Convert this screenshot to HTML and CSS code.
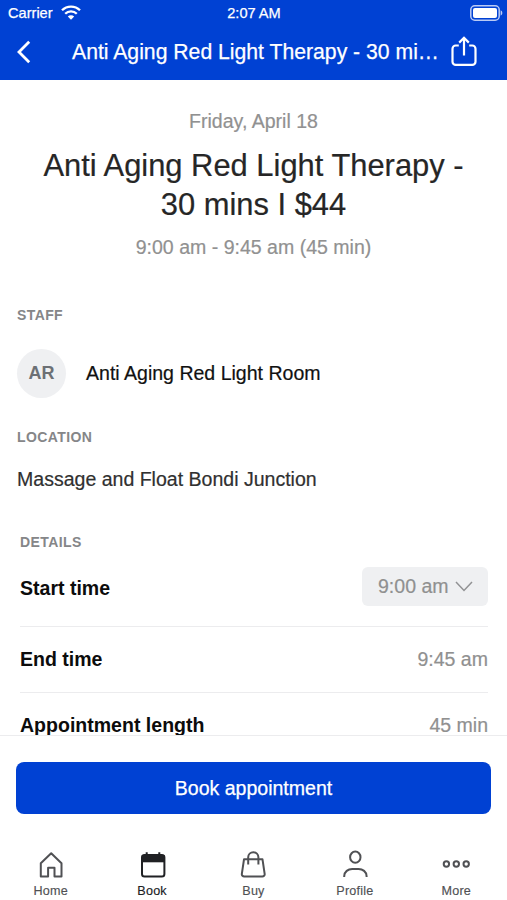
FILE: index.html
```html
<!DOCTYPE html>
<html lang="en">
<head>
<meta charset="utf-8">
<meta name="viewport" content="width=device-width">
<title>Book appointment</title>
<link rel="stylesheet" href="styles.css">
</head>
<body>
<div class="app">
  <header class="header">
    <div class="status">
      <div class="carrier">Carrier
        <svg width="20" height="16" viewBox="0 0 20 16" fill="none" stroke="#fff" stroke-width="2.3"><path d="M1 5.3a12.7 12.7 0 0 1 18 0M4.2 8.7a8.2 8.2 0 0 1 11.6 0"/><path d="M10 14.8 6.8 11.6a4.6 4.6 0 0 1 6.4 0Z" fill="#fff" stroke="none"/></svg>
      </div>
      <div class="clock">2:07 AM</div>
      <svg class="battery" width="33" height="16" viewBox="0 0 33 16"><rect x=".8" y=".8" width="28.4" height="14.4" rx="4" fill="none" stroke="#b9caf5" stroke-width="1.5"/><rect x="3" y="3" width="24" height="10" rx="2" fill="#fff"/><path d="M30.6 5.3q1.8.8 1.8 2.7t-1.8 2.7Z" fill="#b9caf5"/></svg>
    </div>
    <div class="navbar">
      <svg class="back" width="16" height="24" viewBox="0 0 16 24" fill="none" stroke="#fff" stroke-width="2.8"><path d="M13.2 1.8 3 12l10.2 10.2"/></svg>
      <div class="title">Anti Aging Red Light Therapy - 30 mi…</div>
      <svg class="share" width="26" height="31" viewBox="0 0 26 31" fill="none" stroke="#fff" stroke-width="2.2"><path d="M7.8 9.5H4.7a3.2 3.2 0 0 0-3.2 3.2v13a3.2 3.2 0 0 0 3.2 3.2h16.6a3.2 3.2 0 0 0 3.2-3.2v-13a3.2 3.2 0 0 0-3.2-3.2h-3.1M13 19.5V2M8.2 6.6 13 1.8l4.8 4.8"/></svg>
    </div>
  </header>
  <main class="content">
    <div class="date">Friday, April 18</div>
    <h1>Anti Aging Red Light Therapy -<br>30 mins I $44</h1>
    <div class="when">9:00 am - 9:45 am (45 min)</div>
    <h2 class="label">STAFF</h2>
    <div class="staff">
      <div class="avatar">AR</div>
      <div class="name">Anti Aging Red Light Room</div>
    </div>
    <h2 class="label">LOCATION</h2>
    <div class="location">Massage and Float Bondi Junction</div>
    <section class="details">
      <h2 class="label">DETAILS</h2>
      <div class="row start"><b>Start time</b>
        <div class="select">9:00 am <svg width="18" height="11" viewBox="0 0 18 11" fill="none" stroke="#919294" stroke-width="1.5"><path d="m1 1 8 8.5L17 1"/></svg></div>
      </div>
      <div class="row end"><b>End time</b><span>9:45 am</span></div>
      <div class="row length"><b>Appointment length</b><span>45 min</span></div>
    </section>
  </main>
  <div class="action"><button><span>Book appointment</span></button></div>
  <nav class="tabs">
    <div class="tab"><svg width="30" height="30" viewBox="0 0 30 30"><path d="M4.8 13.2 15.2 3.2l10.3 10V26.5h-7v-8.8h-6.4v8.8H4.8Z"/></svg>Home</div>
    <div class="tab active"><svg width="30" height="30" viewBox="0 0 30 30"><rect x="5" y="5" width="22.4" height="21.4" rx="2.5"/><path d="M4.8 5h22.8v7.3H4.8Z" fill="#202124" stroke="none"/><path d="M9.7 2.2V6M22.3 2.2V6"/></svg>Book</div>
    <div class="tab"><svg width="30" height="30" viewBox="0 0 30 30"><path d="M6 9.3h18.5l2.2 14.8a2.3 2.3 0 0 1-2.3 2.4H6.1a2.3 2.3 0 0 1-2.3-2.4ZM10.2 14.5V7.3a5.1 5.1 0 0 1 10.2 0v7.2"/></svg>Buy</div>
    <div class="tab"><svg width="30" height="30" viewBox="0 0 30 30"><ellipse cx="15.3" cy="7.2" rx="5.2" ry="5.6"/><path d="M4.2 27v-.7c0-4.6 4-7.4 8-7.4h6.4c4 0 8 2.8 8 7.4v.7"/></svg>Profile</div>
    <div class="tab"><svg width="30" height="30" viewBox="0 0 30 30"><circle cx="5.4" cy="14" r="2.7"/><circle cx="15.3" cy="14" r="2.7"/><circle cx="25.2" cy="14" r="2.7"/></svg>More</div>
  </nav>
</div>
</body>
</html>
```
FILE: styles.css
```css
* { box-sizing: border-box; }
body { margin: 0; background: #fff; font-family: "Liberation Sans", Arial, sans-serif; font-size: 19.55px; }
svg { display: block; flex: none; }
.app { height: 900px; display: flex; flex-direction: column; overflow: hidden; }
.header { height: 80px; flex: none; background: #0041d3; color: #fff; -webkit-text-stroke: .25px; }
.status { height: 24px; display: grid; grid-template-columns: 1fr auto 1fr; align-items: center; padding: 1px 4px 0 8px; font-size: 14.6px; }
.carrier { display: flex; align-items: center; gap: 8px; }
.clock { margin-right: 3px; }
.battery { justify-self: end; }
.navbar { height: 56px; display: flex; align-items: center; padding: 0 30px 1px 16px; }
.title { width: 367px; margin-left: 40px; font-size: 21.2px; white-space: nowrap; }
.share { margin-left: auto; }
.content { height: 655px; flex: none; overflow: hidden; padding: 0 17px; -webkit-text-stroke: .2px; }
.date { margin-top: 29px; line-height: 24px; text-align: center; color: #919191; }
h1 { margin: 13px 0 0; text-align: center; font-size: 30.9px; line-height: 39px; font-weight: 400; color: #262626; white-space: nowrap; }
.when { margin-top: 11px; line-height: 24px; text-align: center; color: #919191; }
.label { margin: 0; font-size: 14px; line-height: 16px; letter-spacing: .4px; color: #858688; -webkit-text-stroke: 0; }
.when + .label { margin-top: 48px; }
.staff { display: flex; align-items: center; gap: 20px; margin-top: 26px; margin-bottom: 31px; }
.avatar { width: 49px; height: 49px; border-radius: 50%; background: #eff0f2; color: #6c7075; font-weight: 700; font-size: 18px; display: grid; place-items: center; -webkit-text-stroke: 0; }
.name { color: #111; }
.location { margin-top: 22px; line-height: 24px; color: #303030; }
.details { margin: 43px 2px 0 3px; }
.row { display: flex; align-items: center; justify-content: space-between; color: #909090; border-bottom: 1px solid #ececee; }
.row b { color: #0c0c0c; -webkit-text-stroke: 0; }
.start { height: 77px; }
.end, .length { height: 66px; }
.select { width: 126px; height: 39px; margin-top: -3px; border-radius: 6px; background: #eff0f2; display: flex; align-items: center; gap: 6px; padding-left: 16px; }
.action { height: 103px; flex: none; border-top: 1px solid #ececee; padding: 26px 16px 0; }
button { display: block; width: 100%; height: 52px; border: 0; border-radius: 8px; background: #0041d3; color: #fff; font: inherit; -webkit-text-stroke: .25px; }
.tabs { flex: 1; display: grid; grid-template-columns: repeat(5, 101.4px); }
.tab { display: flex; flex-direction: column; align-items: center; padding-top: 12px; gap: 4px; font-size: 12.6px; line-height: 15px; letter-spacing: .2px; color: #505154; -webkit-text-stroke: .15px; }
.tab svg { fill: none; stroke: #505154; stroke-width: 2; stroke-linejoin: round; }
.active { color: #202124; }
.tab.active svg { stroke: #202124; }
```
